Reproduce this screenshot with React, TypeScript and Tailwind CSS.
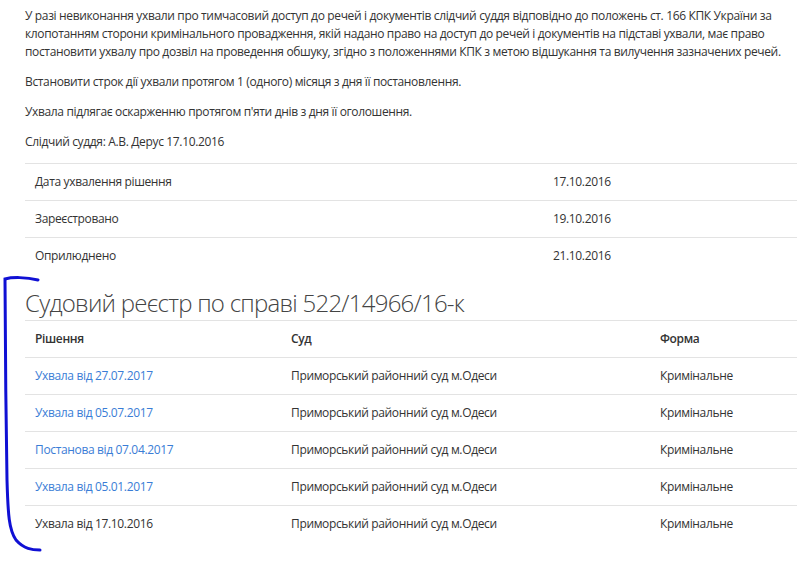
import React from "react";

const FONT = { fontFamily: '"Open Sans", "Noto Sans", Arial, sans-serif' };

const meta = [
  ["Дата ухвалення рішення", "17.10.2016"],
  ["Зареєстровано", "19.10.2016"],
  ["Оприлюднено", "21.10.2016"],
];

const COURT = "Приморський районний суд м.Одеси";

const decisions: { title: string; link: boolean }[] = [
  { title: "Ухвала від 27.07.2017", link: true },
  { title: "Ухвала від 05.07.2017", link: true },
  { title: "Постанова від 07.04.2017", link: true },
  { title: "Ухвала від 05.01.2017", link: true },
  { title: "Ухвала від 17.10.2016", link: false },
];

function Bracket() {
  // hand-drawn marker stroke over the left margin
  return (
    <svg
      className="pointer-events-none absolute left-0 top-0"
      width="60"
      height="561"
      viewBox="0 0 60 561"
    >
      <path
        d="M38 280 C 26 277, 12 277, 5 279 C 5 330, 6 420, 7 480 C 8 515, 9 530, 16 540 C 24 549, 32 550, 40 550"
        fill="none"
        stroke="#1010d4"
        strokeWidth="3"
        strokeLinecap="round"
      />
    </svg>
  );
}

export default function App() {
  return (
    <div
      className="relative w-[807px] h-[561px] overflow-hidden bg-white pl-[25px] pr-[10px] pt-[7px] text-[12px] leading-[18px] tracking-[-0.35px] text-[#333]"
      style={FONT}
    >
      <p className="mb-3">
        У разі невиконання ухвали про тимчасовий доступ до речей і документів слідчий суддя відповідно до положень ст. 166 КПК України за
        <br />
        клопотанням сторони кримінального провадження, якій надано право на доступ до речей і документів на підставі ухвали, має право
        <br />
        постановити ухвалу про дозвіл на проведення обшуку, згідно з положеннями КПК з метою відшукання та вилучення зазначених речей.
      </p>
      <p className="mb-3">Встановити строк дії ухвали протягом 1 (одного) місяця з дня її постановлення.</p>
      <p className="mb-3">Ухвала підлягає оскарженню протягом п'яти днів з дня її оголошення.</p>
      <p className="mb-3">Слідчий суддя: А.В. Дерус 17.10.2016</p>

      <table className="w-full border-collapse">
        <tbody>
          {meta.map(([label, value]) => (
            <tr key={label} className="border-t border-[#e3e3e3]">
              <td className="w-[518px] px-[10px] py-2 leading-5">{label}</td>
              <td className="px-[10px] py-2 leading-5">{value}</td>
            </tr>
          ))}
        </tbody>
      </table>

      <h2 className="mt-[15px] mb-1 text-[24px] leading-[27px] font-light tracking-[-0.75px] text-[#444]">
        Судовий реєстр по справі 522/14966/16-к
      </h2>

      <table className="w-full border-collapse">
        <thead>
          <tr className="border-t border-[#e3e3e3]">
            <th className="w-[256px] px-[10px] py-2 text-left font-semibold leading-5">Рішення</th>
            <th className="w-[369px] px-[10px] py-2 text-left font-semibold leading-5">Суд</th>
            <th className="px-[10px] py-2 text-left font-semibold leading-5">Форма</th>
          </tr>
        </thead>
        <tbody>
          {decisions.map((d) => (
            <tr key={d.title} className="border-t border-[#e3e3e3]">
              <td className="px-[10px] py-2 leading-5">
                {d.link ? (
                  <a href="#" className="text-[#3a7dd6] no-underline">
                    {d.title}
                  </a>
                ) : (
                  d.title
                )}
              </td>
              <td className="px-[10px] py-2 leading-5">{COURT}</td>
              <td className="px-[10px] py-2 leading-5">Кримінальне</td>
            </tr>
          ))}
        </tbody>
      </table>

      <Bracket />
    </div>
  );
}
